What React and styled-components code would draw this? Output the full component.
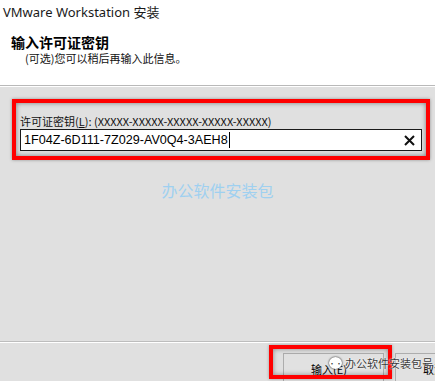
import styled, { createGlobalStyle } from "styled-components";

const GlobalStyle = createGlobalStyle`
  html, body { margin: 0; padding: 0; background: #e0e0e0; }
  body { font-family: "Liberation Sans", "Noto Sans CJK SC", sans-serif; }
`;

const Window = styled.div`
  width: 435px;
  height: 381px;
  display: flex;
  flex-direction: column;
  background: #e0e0e0;
  overflow: hidden;
`;

const Header = styled.div`
  height: 86px;
  background: #fff;
  border-bottom: 1px solid #b9b9b9;
  box-sizing: border-box;
  padding: 3px 0 0 3px;
`;

const Title = styled.div`
  font-family: "Noto Sans", "Noto Sans CJK SC", sans-serif;
  font-size: 13px;
  line-height: 18px;
  color: #1a1a1a;
`;

const Heading = styled.div`
  margin: 12px 0 0 8px;
  font-family: "Noto Sans CJK SC", sans-serif;
  font-size: 14px;
  font-weight: 700;
  line-height: 18px;
  color: #000;
`;

const Sub = styled.div`
  margin: -1px 0 0 22px;
  font-family: "Noto Sans CJK SC", sans-serif;
  font-size: 11px;
  line-height: 16px;
  color: #111;
`;

const Body = styled.div`
  flex: 1;
  border-top: 1px solid #fff;
  display: flex;
  flex-direction: column;
  padding: 12px 5px 0 12px;
`;

const Highlight = styled.div`
  border: 4px solid #f00;
  height: 61px;
  box-sizing: border-box;
  padding: 11px 4px 0 4px;
  box-shadow: inset 0 0 5px rgba(0, 0, 0, 0.45), 0 0 3px rgba(0, 0, 0, 0.35);
`;

const Label = styled.div`
  font-family: "Noto Sans CJK SC", sans-serif;
  font-size: 11px;
  line-height: 14px;
  color: #111;
  u { text-decoration: underline; }
`;

const Field = styled.div`
  margin-top: 1px;
  height: 22px;
  box-sizing: border-box;
  border: 1px solid #1a1a1a;
  background: #fff;
  display: flex;
  align-items: center;
  padding: 0 6px 0 3px;
`;

const Value = styled.span`
  font-size: 12.6px;
  color: #000;
`;

const Caret = styled.span`
  width: 1px;
  height: 16px;
  background: #000;
  margin-left: 1px;
`;

const Clear = styled.span`
  margin-left: auto;
  display: flex;
`;

const Watermark = styled.div`
  margin-top: 18px;
  text-align: center;
  padding-right: 7px;
  font-family: "Noto Sans CJK SC", sans-serif;
  font-size: 16px;
  color: #9fd0f0;
`;

const Footer = styled.div`
  margin-top: auto;
  height: 40px;
  border-top: 1px solid #bdbdbd;
  box-shadow: inset 0 1px 0 #fff;
  display: flex;
  align-items: flex-start;
  padding: 11px 0 0 283px;
  box-sizing: border-box;
  position: relative;
`;

const Button = styled.div`
  width: 101px;
  height: 30px;
  box-sizing: border-box;
  background: #e1e1e1;
  border: 1px solid #adadad;
  font-family: "Noto Sans CJK SC", sans-serif;
  font-size: 11px;
  color: #000;
  padding: 7px 0 0 27px;
  flex-shrink: 0;
`;

const NextButton = styled(Button)`
  margin-left: 11px;
`;

const ButtonMark = styled.div`
  position: absolute;
  left: 269px;
  top: 3px;
  width: 123px;
  height: 34px;
  box-sizing: border-box;
  border: 4px solid #f00;
  box-shadow: inset 0 0 5px rgba(0, 0, 0, 0.4), 0 0 3px rgba(0, 0, 0, 0.3);
`;

const Stamp = styled.div`
  position: absolute;
  left: 329px;
  top: 13px;
  display: flex;
  align-items: center;
  gap: 3px;
  font-family: "Noto Sans CJK SC", sans-serif;
  font-size: 11px;
  color: #3a3a3a;
  text-shadow: 0 0 2px #fff, 0 0 1px #fff;
  white-space: nowrap;
`;

const WeChat = styled.span`
  width: 13px;
  height: 12px;
  border-radius: 50%;
  background: #fff;
  box-shadow: 0 0 2px #000;
  font-size: 7px;
  color: #333;
  display: flex;
  align-items: center;
  justify-content: center;
  text-shadow: none;
`;

export default function App() {
  return (
    <>
      <GlobalStyle />
      <Window>
        <Header>
          <Title>VMware Workstation 安装</Title>
          <Heading>输入许可证密钥</Heading>
          <Sub>(可选)您可以稍后再输入此信息。</Sub>
        </Header>
        <Body>
          <Highlight>
            <Label>
              许可证密钥(<u>L</u>): (XXXXX-XXXXX-XXXXX-XXXXX-XXXXX)
            </Label>
            <Field>
              <Value>1F04Z-6D111-7Z029-AV0Q4-3AEH8</Value>
              <Caret />
              <Clear>
                <svg width="11" height="11" viewBox="0 0 11 11">
                  <path d="M1 1L10 10M10 1L1 10" stroke="#111" strokeWidth="2" />
                </svg>
              </Clear>
            </Field>
          </Highlight>
          <Watermark>办公软件安装包</Watermark>
        </Body>
        <Footer>
          <Button>输入(E)</Button>
          <NextButton>取消</NextButton>
          <ButtonMark />
          <Stamp>
            <WeChat>••</WeChat>
            办公软件安装包号
          </Stamp>
        </Footer>
      </Window>
    </>
  );
}
